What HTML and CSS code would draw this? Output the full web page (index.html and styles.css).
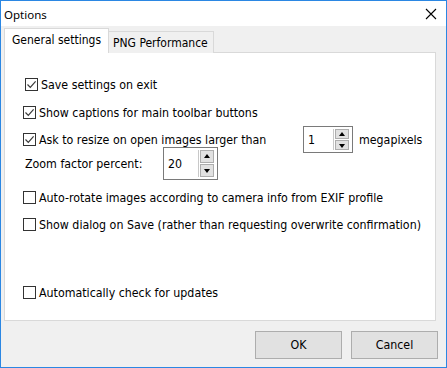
FILE: index.html
```html
<!DOCTYPE html>
<html>
<head>
<meta charset="utf-8">
<link rel="stylesheet" href="styles.css">
</head>
<body>
<div class="window">
  <div class="titlebar">
    <span class="title">Options</span>
    <svg class="close" width="12" height="12" viewBox="0 0 12 12"><path d="M1 1L11 11M11 1L1 11" stroke="#000" stroke-width="1.1" fill="none"/></svg>
  </div>
  <div class="client">
    <div class="tabs">
      <div class="tab active">General settings</div>
      <div class="tab">PNG Performance</div>
    </div>
    <div class="panel">
      <div class="row r1 first">
        <span class="cb checked"><svg width="11" height="11" viewBox="0 0 11 11"><path d="M1.5 5.5L4.3 8.3L9.6 2.4" stroke="#3a3a3a" stroke-width="1.2" fill="none"/></svg></span>
        <span class="lbl">Save settings on exit</span>
      </div>
      <div class="row r2">
        <span class="cb checked"><svg width="11" height="11" viewBox="0 0 11 11"><path d="M1.5 5.5L4.3 8.3L9.6 2.4" stroke="#3a3a3a" stroke-width="1.2" fill="none"/></svg></span>
        <span class="lbl">Show captions for main toolbar buttons</span>
      </div>
      <div class="row r3">
        <span class="cb checked"><svg width="11" height="11" viewBox="0 0 11 11"><path d="M1.5 5.5L4.3 8.3L9.6 2.4" stroke="#3a3a3a" stroke-width="1.2" fill="none"/></svg></span>
        <span class="lbl wide">Ask to resize on open images larger than</span>
        <span class="spin small">
          <span class="val">1</span>
          <span class="sep"></span>
          <span class="arrows">
            <span class="arr up"></span>
            <span class="arr down"></span>
          </span>
        </span>
        <span class="unit">megapixels</span>
      </div>
      <div class="row r4">
        <span class="zoomlbl">Zoom factor percent:</span>
        <span class="spin big">
          <span class="val">20</span>
          <span class="sep"></span>
          <span class="arrows">
            <span class="arr up"></span>
            <span class="arr down"></span>
          </span>
        </span>
      </div>
      <div class="row r5">
        <span class="cb"></span>
        <span class="lbl">Auto-rotate images according to camera info from EXIF profile</span>
      </div>
      <div class="row r6">
        <span class="cb"></span>
        <span class="lbl">Show dialog on Save (rather than requesting overwrite confirmation)</span>
      </div>
      <div class="row r7">
        <span class="cb"></span>
        <span class="lbl">Automatically check for updates</span>
      </div>
    </div>
    <div class="footer">
      <button class="btn">OK</button>
      <button class="btn">Cancel</button>
    </div>
  </div>
</div>
</body>
</html>
```
FILE: styles.css
```css
html, body {
  margin: 0;
  padding: 0;
  background: #f0f0f0;
}
.window {
  width: 447px;
  height: 368px;
  box-sizing: border-box;
  border: 1px solid #2b87e3;
  display: flex;
  flex-direction: column;
  background: #f0f0f0;
  font-family: "DejaVu Sans Condensed", "DejaVu Sans", sans-serif;
  font-size: 12.3px;
  color: #000;
}
.titlebar {
  height: 25px;
  background: #fff;
  display: flex;
  align-items: center;
  justify-content: space-between;
  padding: 0 9px 0 3px;
}
.title {
  font-family: "Noto Sans", sans-serif;
  font-size: 11.5px;
  margin-top: 1px;
}
.close {
  display: block;
  margin-top: 1px;
}
.client {
  flex: 1;
  display: flex;
  flex-direction: column;
  padding: 2px 10px 0 3px;
}
.tabs {
  display: flex;
  align-items: flex-end;
  height: 25px;
  position: relative;
  z-index: 1;
  margin-bottom: -1px;
}
.tab {
  box-sizing: border-box;
  border: 1px solid #d9d9d9;
  border-bottom: none;
  background: #f0f0f0;
  height: 22px;
  padding: 0 0 0 4px;
  display: flex;
  align-items: center;
  width: 106px;
  white-space: nowrap;
  font-size: 12px;
}
.tab.active {
  background: #fff;
  height: 25px;
  width: 105px;
  padding-left: 7px;
  margin-right: -1px;
  padding-bottom: 2px;
}
.panel {
  box-sizing: border-box;
  height: 269px;
  background: #fff;
  border: 1px solid #d9d9d9;
  padding: 25px 0 0 18px;
}
.row {
  height: 13px;
  display: flex;
  align-items: center;
  white-space: nowrap;
}
.r1 { margin-left: 2px; }
.r2 { margin-top: 15px; }
.r3 { margin-top: 14px; }
.r4 { margin-top: 11px; margin-left: 2px; }
.r5 { margin-top: 21px; }
.r6 { margin-top: 14px; }
.r7 { margin-top: 55px; }
.cb {
  box-sizing: border-box;
  width: 13px;
  height: 13px;
  border: 1px solid #333;
  background: #fff;
  flex: none;
  display: flex;
  align-items: center;
  justify-content: center;
  margin-right: 3px;
}
.cb svg { display: block; }
.lbl.wide {
  width: 264px;
}
.zoomlbl {
  width: 138px;
}
.spin {
  box-sizing: border-box;
  border: 1px solid #7a7a7a;
  background: #fff;
  display: flex;
  align-items: center;
  flex: none;
}
.spin.small {
  width: 50px;
  height: 27px;
}
.spin.big {
  width: 55px;
  height: 33px;
}
.val {
  flex: 1;
  padding-left: 4px;
}
.sep {
  width: 1px;
  align-self: stretch;
  margin: 2px 1px 2px 0;
  background: #c8c8c8;
}
.arrows {
  display: flex;
  flex-direction: column;
  gap: 1px;
  margin-right: 3px;
}
.arr {
  box-sizing: border-box;
  width: 14px;
  height: 10px;
  background: #e1e1e1;
  border: 1px solid #adadad;
  position: relative;
}
.spin.big .arr {
  height: 13px;
}
.arr::after {
  content: "";
  position: absolute;
  left: 3px;
  width: 0;
  height: 0;
  border-left: 3.5px solid transparent;
  border-right: 3.5px solid transparent;
}
.arr.up::after {
  top: 2px;
  border-bottom: 4px solid #000;
}
.arr.down::after {
  top: 3px;
  border-top: 4px solid #000;
}
.spin.big .arr.up::after { top: 3px; }
.spin.big .arr.down::after { top: 4px; }
.unit {
  margin-left: 6px;
}
.footer {
  display: flex;
  justify-content: flex-end;
  gap: 9px;
  padding-top: 10px;
  margin-right: -2px;
}
.btn {
  box-sizing: border-box;
  width: 87px;
  height: 28px;
  background: #e1e1e1;
  border: 1px solid #adadad;
  font-family: "DejaVu Sans Condensed", "DejaVu Sans", sans-serif;
  font-size: 12.3px;
  color: #000;
  padding: 0;
}
```
